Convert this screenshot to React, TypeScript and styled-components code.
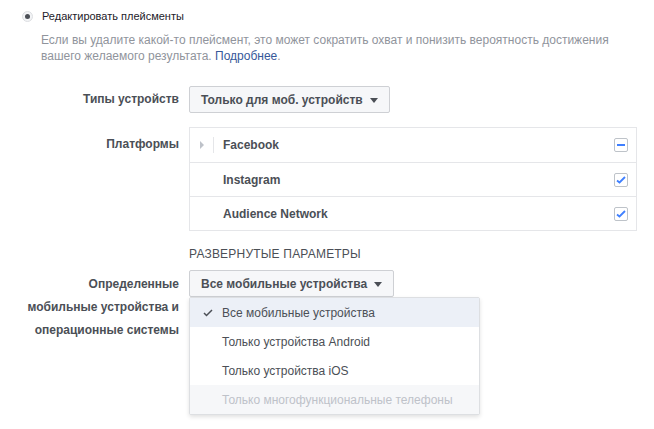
import React from 'react'
import styled, { createGlobalStyle } from 'styled-components'

const GlobalStyle = createGlobalStyle`
	body {
		margin: 0;
		background: #ffffff;
		font-family: "Liberation Sans", Arial, sans-serif;
		font-size: 12px;
		color: #4b4f56;
	}
`

const Page = styled.div`
	width: 654px;
	height: 429px;
	padding-top: 8px;
	box-sizing: border-box;
	overflow: hidden;
`

const Header = styled.div`
	display: flex;
	align-items: center;
	height: 16px;
	padding-left: 22px;
	gap: 9px;
`

const Radio = styled.span`
	width: 11px;
	height: 11px;
	border-radius: 50%;
	background: #f2f3f5;
	border: 1px solid #dddfe2;
	box-sizing: border-box;
	display: flex;
	align-items: center;
	justify-content: center;
	&::after {
		content: '';
		width: 5px;
		height: 5px;
		border-radius: 50%;
		background: #4b4f56;
	}
`

const Title = styled.span`
	color: #1d2129;
	font-size: 11px;
`

const Description = styled.div`
	margin: 8px 0 0 41px;
	line-height: 16px;
	color: #90949c;
`

const DescLine = styled.div`
	display: flex;
	white-space: pre;
`

const Link = styled.a`
	color: #365899;
	text-decoration: none;
`

const Form = styled.div`
	margin-top: 22px;
	display: flex;
	flex-direction: column;
`

const Row = styled.div<{ $align?: string; $mt?: number }>`
	display: flex;
	align-items: ${p => p.$align ?? 'flex-start'};
	margin-top: ${p => p.$mt ?? 0}px;
`

const Label = styled.div<{ $pt?: number }>`
	width: 179px;
	flex: none;
	text-align: right;
	font-weight: bold;
	line-height: 23px;
	padding-top: ${p => p.$pt ?? 0}px;
	box-sizing: border-box;
	color: #4b4f56;
`

const Field = styled.div`
	margin-left: 10px;
	position: relative;
	flex: 1;
`

const Select = styled.div`
	display: inline-flex;
	align-items: center;
	height: 27px;
	box-sizing: border-box;
	padding: 0 11px;
	gap: 7px;
	background: #f6f7f9;
	border: 1px solid #ced0d4;
	border-radius: 2px;
	font-weight: bold;
	color: #4b4f56;
`

const Caret = styled.span`
	width: 0;
	height: 0;
	border-left: 4px solid transparent;
	border-right: 4px solid transparent;
	border-top: 5px solid #4b4f56;
	margin-top: 1px;
`

const Table = styled.div`
	width: 448px;
	border: 1px solid #e5e6e9;
	box-sizing: border-box;
`

const PlatformRow = styled.div<{ $h: number }>`
	display: flex;
	align-items: center;
	height: ${p => p.$h}px;
	padding: 0 8px 0 33px;
	position: relative;
	& + & {
		border-top: 1px solid #e5e6e9;
	}
`

const Expander = styled.span`
	position: absolute;
	left: 10px;
	top: 50%;
	margin-top: -4px;
	width: 0;
	height: 0;
	border-top: 4px solid transparent;
	border-bottom: 4px solid transparent;
	border-left: 4px solid #bec2c9;
	&::after {
		content: '';
		position: absolute;
		left: 9px;
		top: -8px;
		width: 1px;
		height: 16px;
		background: #e5e6e9;
	}
`

const PlatformName = styled.span`
	flex: 1;
	font-weight: bold;
	color: #4b4f56;
`

const Checkbox = styled.span`
	width: 14px;
	height: 14px;
	box-sizing: border-box;
	border: 1px solid #bec3c9;
	border-radius: 2px;
	background: #fff;
	display: flex;
	align-items: center;
	justify-content: center;
`

const SectionTitle = styled.div`
	margin: 16px 0 0 189px;
	line-height: 14px;
	text-transform: uppercase;
	letter-spacing: 0.2px;
	color: #4b4f56;
`

const Menu = styled.div`
	position: absolute;
	left: 0;
	top: 27px;
	width: 291px;
	background: #fff;
	border: 1px solid #dddfe2;
	border-radius: 2px;
	box-shadow: 0 2px 4px rgba(0, 0, 0, 0.12);
	box-sizing: border-box;
`

const MenuItem = styled.div<{ $active?: boolean; $disabled?: boolean }>`
	display: flex;
	align-items: center;
	height: 29px;
	padding-left: 32px;
	position: relative;
	background: ${p => (p.$active ? '#ecf0f7' : p.$disabled ? '#f6f7f9' : '#fff')};
	color: ${p => (p.$disabled ? '#bec2c9' : '#4b4f56')};
`

const MenuCheck = styled.svg`
	position: absolute;
	left: 13px;
	top: 11px;
`

const CheckIcon = () => (
	<svg width="10" height="8" viewBox="0 0 10 8">
		<path d="M1 4.5 L3.5 6.5 L9 1" fill="none" stroke="#4080ff" strokeWidth="1.8" />
	</svg>
)

const MinusIcon = () => (
	<svg width="8" height="2" viewBox="0 0 8 2">
		<rect width="8" height="2" fill="#4080ff" />
	</svg>
)

export default function App() {
	return (
		<Page>
			<GlobalStyle />
			<Header>
				<Radio />
				<Title>Редактировать плейсменты</Title>
			</Header>
			<Description>
				<DescLine>
					<span>Если вы удалите какой-то плейсмент, это может сократить охват и понизить вероятность достижения</span>
				</DescLine>
				<DescLine>
					<span>вашего желаемого результата. </span>
					<Link href="#">Подробнее</Link>
					<span>.</span>
				</DescLine>
			</Description>
			<Form>
				<Row $align="center">
					<Label>Типы устройств</Label>
					<Field>
						<Select>
							Только для моб. устройств
							<Caret />
						</Select>
					</Field>
				</Row>
				<Row $mt={14}>
					<Label $pt={5.5}>Платформы</Label>
					<Field>
						<Table>
							<PlatformRow $h={34}>
								<Expander />
								<PlatformName>Facebook</PlatformName>
								<Checkbox>
									<MinusIcon />
								</Checkbox>
							</PlatformRow>
							<PlatformRow $h={33}>
								<PlatformName>Instagram</PlatformName>
								<Checkbox>
									<CheckIcon />
								</Checkbox>
							</PlatformRow>
							<PlatformRow $h={33}>
								<PlatformName>Audience Network</PlatformName>
								<Checkbox>
									<CheckIcon />
								</Checkbox>
							</PlatformRow>
						</Table>
					</Field>
				</Row>
				<SectionTitle>Развернутые параметры</SectionTitle>
				<Row $mt={9}>
					<Label $pt={3}>
						Определенные
						<br />
						мобильные устройства и
						<br />
						операционные системы
					</Label>
					<Field>
						<Select>
							Все мобильные устройства
							<Caret />
						</Select>
						<Menu>
							<MenuItem $active>
								<MenuCheck width="10" height="8" viewBox="0 0 10 8">
									<path d="M1 4 L3.5 6.5 L9 1" fill="none" stroke="#4b4f56" strokeWidth="1.5" />
								</MenuCheck>
								Все мобильные устройства
							</MenuItem>
							<MenuItem>Только устройства Android</MenuItem>
							<MenuItem>Только устройства iOS</MenuItem>
							<MenuItem $disabled>Только многофункциональные телефоны</MenuItem>
						</Menu>
					</Field>
				</Row>
			</Form>
		</Page>
	)
}
